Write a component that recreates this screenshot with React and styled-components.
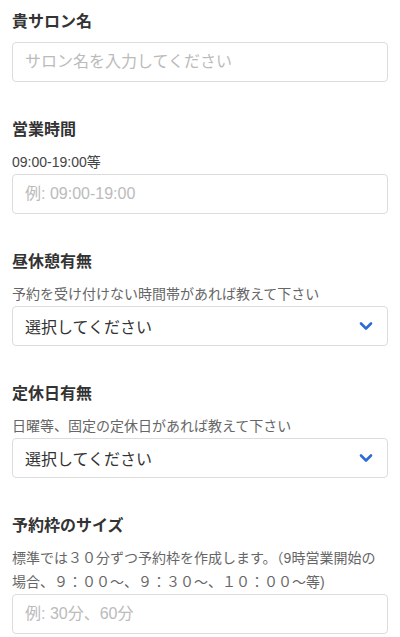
import React from "react";
import styled, { createGlobalStyle } from "styled-components";

const GlobalStyle = createGlobalStyle`
  html, body {
    margin: 0;
    padding: 0;
    background: #fff;
  }
  body {
    font-family: "Liberation Sans", "Noto Sans CJK JP", sans-serif;
    color: #333;
  }
`;

const fields = [
  { title: "貴サロン名", placeholder: "サロン名を入力してください" },
  { title: "営業時間", help: "09:00-19:00等", helpDark: true, placeholder: "例: 09:00-19:00" },
  { title: "昼休憩有無", help: "予約を受け付けない時間帯があれば教えて下さい", select: true },
  { title: "定休日有無", help: "日曜等、固定の定休日があれば教えて下さい", select: true },
  {
    title: "予約枠のサイズ",
    help: "標準では３０分ずつ予約枠を作成します。（9時営業開始の場合、９：００〜、９：３０〜、１０：００〜等)",
    placeholder: "例: 30分、60分"
  }
];

const Chevron = () => (
  <svg width="14" height="10" viewBox="0 0 14 10">
    <polyline points="2,2.5 7,7.5 12,2.5" fill="none" stroke="#2f6bd8" strokeWidth="2.6" strokeLinecap="round" strokeLinejoin="round" />
  </svg>
);

const App = () => (
  <Page>
    <GlobalStyle />
    {fields.map((f) => (
      <Section key={f.title}>
        <Title>{f.title}</Title>
        {f.help && <Help $dark={f.helpDark}>{f.help}</Help>}
        {f.select ? (
          <SelectBox>
            <span>選択してください</span>
            <Chevron />
          </SelectBox>
        ) : (
          <Input type="text" placeholder={f.placeholder} />
        )}
      </Section>
    ))}
  </Page>
);

const Page = styled.div`
  padding: 11px 12px 0 12px;
  display: flex;
  flex-direction: column;
  gap: 37px;
`;

const Section = styled.div`
  display: flex;
  flex-direction: column;
`;

const Title = styled.div`
  font-size: 16px;
  font-weight: 700;
  line-height: 22px;
  color: #333;
  margin-bottom: 9px;
`;

const Help = styled.div`
  font-size: 14px;
  line-height: 24px;
  color: ${(p) => (p.$dark ? "#444" : "#666")};
`;

const Input = styled.input`
  box-sizing: border-box;
  width: 100%;
  height: 40px;
  border: 1px solid #dcdcdc;
  border-radius: 4px;
  padding: 0 12px;
  font-family: inherit;
  font-size: 16px;
  color: #333;
  outline: none;
  &::placeholder {
    color: #bbb;
  }
`;

const SelectBox = styled.div`
  box-sizing: border-box;
  height: 40px;
  border: 1px solid #dcdcdc;
  border-radius: 4px;
  padding: 0 14px 0 12px;
  display: flex;
  align-items: center;
  justify-content: space-between;
  font-size: 16px;
  color: #333;
`;

export default App;
